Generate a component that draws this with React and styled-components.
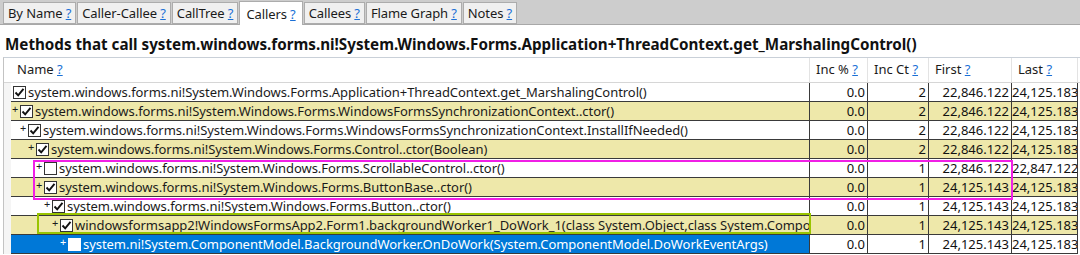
import React from 'react';
import styled, { createGlobalStyle } from 'styled-components';

const GlobalStyle = createGlobalStyle`
  html, body { margin: 0; padding: 0; background: #fff; }
  body {
    font-family: "Noto Sans", "Liberation Sans", sans-serif;
    color: #1b1b1b;
    overflow: hidden;
  }
`;

const TABS = ['By Name', 'Caller-Callee', 'CallTree', 'Callers', 'Callees', 'Flame Graph', 'Notes'];

const COLUMNS = ['Inc %', 'Inc Ct', 'First', 'Last'];

const ROWS = [
  { level: 0, checked: true, name: 'system.windows.forms.ni!System.Windows.Forms.Application+ThreadContext.get_MarshalingControl()', inc: '0.0', ct: '2', first: '22,846.122', last: '24,125.183' },
  { level: 1, checked: true, name: 'system.windows.forms.ni!System.Windows.Forms.WindowsFormsSynchronizationContext..ctor()', inc: '0.0', ct: '2', first: '22,846.122', last: '24,125.183' },
  { level: 2, checked: true, name: 'system.windows.forms.ni!System.Windows.Forms.WindowsFormsSynchronizationContext.InstallIfNeeded()', inc: '0.0', ct: '2', first: '22,846.122', last: '24,125.183' },
  { level: 3, checked: true, name: 'system.windows.forms.ni!System.Windows.Forms.Control..ctor(Boolean)', inc: '0.0', ct: '2', first: '22,846.122', last: '24,125.183' },
  { level: 4, checked: false, name: 'system.windows.forms.ni!System.Windows.Forms.ScrollableControl..ctor()', inc: '0.0', ct: '1', first: '22,846.122', last: '22,847.122' },
  { level: 4, checked: true, name: 'system.windows.forms.ni!System.Windows.Forms.ButtonBase..ctor()', inc: '0.0', ct: '1', first: '24,125.143', last: '24,125.183' },
  { level: 5, checked: true, name: 'system.windows.forms.ni!System.Windows.Forms.Button..ctor()', inc: '0.0', ct: '1', first: '24,125.143', last: '24,125.183' },
  { level: 6, checked: true, name: 'windowsformsapp2!WindowsFormsApp2.Form1.backgroundWorker1_DoWork_1(class System.Object,class System.ComponentModel.DoWorkEventArgs)', inc: '0.0', ct: '1', first: '24,125.143', last: '24,125.183' },
  { level: 7, checked: false, selected: true, name: 'system.ni!System.ComponentModel.BackgroundWorker.OnDoWork(System.ComponentModel.DoWorkEventArgs)', inc: '0.0', ct: '1', first: '24,125.143', last: '24,125.183' },
];

const Page = styled.div`
  width: 1080px;
  height: 255px;
  overflow: hidden;
`;

const TabStrip = styled.div`
  display: flex;
  align-items: flex-end;
  gap: 1px;
  height: 24px;
  padding-left: 3px;
  background: #cdcdcd;
  border-bottom: 1px solid #a8a8a8;
`;

const Tab = styled.div`
  display: flex;
  align-items: center;
  height: ${p => (p.$active ? '23px' : '20px')};
  margin-bottom: ${p => (p.$active ? '-1px' : '0')};
  padding: 0 ${p => (p.$active ? '6px' : '4px')};
  background: ${p => (p.$active ? '#fff' : '#f0f0f0')};
  border: 1px solid #acacac;
  border-bottom: ${p => (p.$active ? 'none' : '1px solid #acacac')};
  font-size: 13px;
  letter-spacing: -0.1px;
  color: #1b1b1b;
  white-space: pre;
`;

const Help = styled.span`
  color: #1a6fd6;
  text-decoration: underline;
`;

const Title = styled.h1`
  display: flex;
  align-items: center;
  box-sizing: border-box;
  height: 32px;
  margin: 0;
  padding: 5px 5px 0;
  font-size: 15.2px;
  font-weight: 700;
  color: #111;
  white-space: nowrap;
`;

const Grid = styled.div`
  position: relative;
  margin-left: 3px;
  border-left: 1px solid #c3c3c3;
  border-top: 1px solid #c9d0d8;
`;

const HeaderRow = styled.div`
  display: grid;
  grid-template-columns: 806px 58px 61px 83px 66px;
  height: 24px;
  border-bottom: 1px solid #d6d6d6;
`;

const HeaderCell = styled.div`
  display: flex;
  align-items: center;
  padding: 0 0 3px ${p => (p.$first ? '13px' : '6px')};
  border-right: 1px solid #e3e3e3;
  font-size: 13px;
  color: #1b1b1b;
  white-space: pre;
`;

const Row = styled.div`
  display: grid;
  grid-template-columns: 7px 799px 58px 61px 83px 66px;
  height: 19px;
`;

const Strip = styled.div`
  background: #f5f5f5;
`;

const Cell = styled.div`
  border-right: 1px solid #3a3a3a;
  border-bottom: 1px solid #3a3a3a;
  background: ${p => p.$bg};
  font-size: 13px;
  line-height: 18px;
  white-space: nowrap;
  overflow: hidden;
`;

const NameCell = styled(Cell)`
  display: flex;
  align-items: center;
  padding-left: ${p => (p.$level ? 1 + 8 * (p.$level - 1) : 2)}px;
  color: ${p => (p.$selected ? '#fff' : '#1b1b1b')};
  letter-spacing: -0.05px;
`;

const NameText = styled.span`
  flex: 1;
  min-width: 0;
  overflow: hidden;
`;

const NumCell = styled(Cell)`
  padding-right: 2px;
  text-align: right;
  color: #111;
`;

const Plus = styled.span`
  flex: 0 0 8px;
  align-self: flex-start;
  font-size: 11px;
  line-height: 13px;
`;

const Box = styled.span`
  flex: 0 0 13px;
  display: flex;
  height: 13px;
  margin-right: 2px;
  box-sizing: border-box;
  background: #fff;
  border: 1px solid ${p => (p.$light ? '#fff' : '#333')};
`;

const Outline = styled.div`
  position: absolute;
  box-sizing: border-box;
  border: 2px solid ${p => p.$color};
  pointer-events: none;
`;

const CheckBox = ({ checked, light }) => (
  <Box $light={light}>
    {checked && (
      <svg width="11" height="11" viewBox="0 0 11 11">
        <path d="M1.5 5.5 L4.2 8.4 L9.5 1.8" fill="none" stroke="#111" strokeWidth="1.9" />
      </svg>
    )}
  </Box>
);

const rowColor = (i) => (i % 2 === 1 ? '#eee8aa' : '#fff');

export default function App() {
  return (
    <Page>
      <GlobalStyle />
      <TabStrip>
        {TABS.map((t) => (
          <Tab key={t} $active={t === 'Callers'}>
            {t} <Help>?</Help>
          </Tab>
        ))}
      </TabStrip>
      <Title>Methods that call system.windows.forms.ni!System.Windows.Forms.Application+ThreadContext.get_MarshalingControl()</Title>
      <Grid>
        <HeaderRow>
          <HeaderCell $first>
            Name <Help>?</Help>
          </HeaderCell>
          {COLUMNS.map((c) => (
            <HeaderCell key={c}>
              {c} <Help>?</Help>
            </HeaderCell>
          ))}
        </HeaderRow>
        {ROWS.map((r, i) => (
          <Row key={i}>
            <Strip />
            <NameCell $bg={r.selected ? '#0078d7' : rowColor(i)} $level={r.level} $selected={r.selected}>
              {r.level > 0 && <Plus>+</Plus>}
              <CheckBox checked={r.checked} light={r.selected} />
              <NameText>{r.name}</NameText>
            </NameCell>
            <NumCell $bg={rowColor(i)}>{r.inc}</NumCell>
            <NumCell $bg={rowColor(i)}>{r.ct}</NumCell>
            <NumCell $bg={rowColor(i)}>{r.first}</NumCell>
            <NumCell $bg={rowColor(i)}>{r.last}</NumCell>
          </Row>
        ))}
        <Outline $color="#f01fe6" style={{ left: 29, top: 102, width: 980, height: 40 }} />
        <Outline $color="#99c400" style={{ left: 33, top: 155, width: 774, height: 21 }} />
      </Grid>
    </Page>
  );
}
